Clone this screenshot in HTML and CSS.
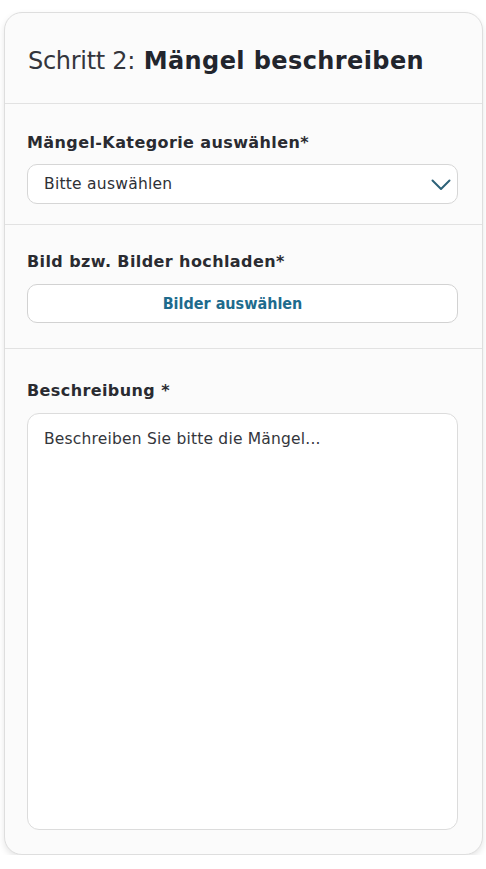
FILE: index.html
```html
<!DOCTYPE html>
<html lang="de">
<head>
<meta charset="utf-8">
<title>Schritt 2</title>
<link rel="stylesheet" href="styles.css">
</head>
<body>
<div class="card">
  <div class="head">
    <h1 class="title"><span class="light">Schritt 2:</span> Mängel beschreiben</h1>
  </div>
  <div class="section s1">
    <div class="label">Mängel-Kategorie auswählen*</div>
    <div class="select">
      <span>Bitte auswählen</span>
      <svg class="chev" width="20" height="12" viewBox="0 0 20 12"><path d="M1.5 1.5 L10 10 L18.5 1.5" fill="none" stroke="#2d6278" stroke-width="2" stroke-linecap="round" stroke-linejoin="round"/></svg>
    </div>
  </div>
  <div class="section s2">
    <div class="label">Bild bzw. Bilder hochladen*</div>
    <div class="button">Bilder auswählen</div>
  </div>
  <div class="section s3">
    <div class="label">Beschreibung *</div>
    <div class="textarea">Beschreiben Sie bitte die Mängel...</div>
  </div>
</div>
</body>
</html>
```
FILE: styles.css
```css
html, body { margin: 0; padding: 0; background: #fff; }
body { font-family: "DejaVu Sans", "Open Sans", sans-serif; color: #26282f; }
.card {
  margin: 12px 3px 0 4px;
  height: 843px;
  box-sizing: border-box;
  background: #fbfbfb;
  border: 1px solid #dedede;
  border-radius: 18px;
  box-shadow: 0 3px 6px rgba(0,0,0,0.10);
  display: flex;
  flex-direction: column;
}
.head {
  height: 91px;
  box-sizing: border-box;
  padding: 31px 0 0 23px;
  border-bottom: 1px solid #e2e2e2;
}
.title {
  margin: 0;
  font-size: 24px;
  line-height: 34px;
  font-weight: 700;
  letter-spacing: 0.4px;
  color: #22252d;
}
.light { font-weight: 400; color: #33353b; letter-spacing: -0.3px; }
.section {
  padding: 0 24px 0 22px;
  border-bottom: 1px solid #e2e2e2;
  box-sizing: border-box;
}
.s1 { height: 121px; padding-top: 28px; }
.s2 { height: 124px; padding-top: 26px; }
.s3 { flex: 1; border-bottom: none; padding-top: 31px; padding-bottom: 24px; display: flex; flex-direction: column; }
.label {
  font-size: 16px;
  font-weight: 700;
  line-height: 22px;
  letter-spacing: 0.4px;
  color: #2a2b31;
  margin-bottom: 10px;
}
.s2 .label { margin-bottom: 11px; }
.s3 .label { margin-bottom: 11px; }
.select {
  height: 40px;
  box-sizing: border-box;
  border: 1px solid #d6d6d6;
  border-radius: 10px;
  background: #fff;
  display: flex;
  align-items: center;
  justify-content: space-between;
  padding: 0 6px 0 16px;
  font-size: 15.5px;
  letter-spacing: 0.25px;
  color: #2e3036;
}
.chev { margin-top: 1px; }
.button {
  height: 39px;
  box-sizing: border-box;
  border: 1px solid #d2d2d2;
  border-radius: 10px;
  background: #fff;
  display: flex;
  align-items: center;
  justify-content: center;
  padding-right: 20px;
  font-family: "DejaVu Sans Condensed", "Roboto", sans-serif;
  font-weight: 700;
  font-size: 16px;
  color: #1e6b8d;
}
.textarea {
  flex: 1;
  box-sizing: border-box;
  border: 1px solid #dcdcdc;
  border-radius: 12px;
  background: #fff;
  padding: 13px 16px;
  font-size: 15.5px;
  line-height: 24px;
  letter-spacing: 0.2px;
  color: #34363c;
}
```
